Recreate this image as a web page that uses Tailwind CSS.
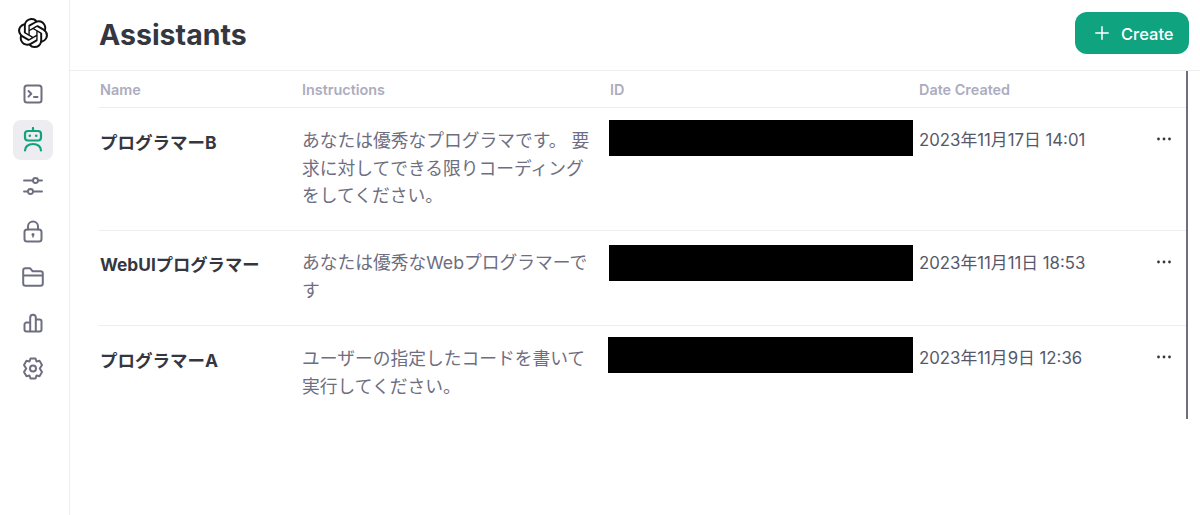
<!DOCTYPE html>
<html lang="ja">
<head>
<meta charset="utf-8">
<script src="https://cdn.jsdelivr.net/npm/@tailwindcss/browser@4"></script>
</head>
<body class="bg-white overflow-hidden">
<div class="flex h-[515px] w-[1200px] font-['Inter','Noto_Sans_CJK_JP',sans-serif] text-[#353740]">
  <aside class="w-[70px] shrink-0 border-r border-[#ececf1] flex flex-col items-start pl-[13px] pt-[18px]">
    <svg class="w-[30px] h-[30px] ml-[5px] mb-[26px]" viewBox="0 0 24 24" fill="#111"><path d="M22.2819 9.8211a5.9847 5.9847 0 0 0-.5157-4.9108 6.0462 6.0462 0 0 0-6.5098-2.9A6.0651 6.0651 0 0 0 4.9807 4.1818a5.9847 5.9847 0 0 0-3.9977 2.9 6.0462 6.0462 0 0 0 .7427 7.0966 5.98 5.98 0 0 0 .511 4.9107 6.051 6.051 0 0 0 6.5146 2.9001A5.9847 5.9847 0 0 0 13.2599 24a6.0557 6.0557 0 0 0 5.7718-4.2058 5.9894 5.9894 0 0 0 3.9977-2.9001 6.0557 6.0557 0 0 0-.7475-7.0729zm-9.022 12.6081a4.4755 4.4755 0 0 1-2.8764-1.0408l.1419-.0804 4.7783-2.7582a.7948.7948 0 0 0 .3927-.6813v-6.7369l2.02 1.1686a.071.071 0 0 1 .038.052v5.5826a4.504 4.504 0 0 1-4.4945 4.4944zm-9.6607-4.1254a4.4708 4.4708 0 0 1-.5346-3.0137l.142.0852 4.783 2.7582a.7712.7712 0 0 0 .7806 0l5.8428-3.3685v2.3324a.0804.0804 0 0 1-.0332.0615L9.74 19.9502a4.4992 4.4992 0 0 1-6.1408-1.6464zM2.3408 7.8956a4.485 4.485 0 0 1 2.3655-1.9728V11.6a.7664.7664 0 0 0 .3879.6765l5.8144 3.3543-2.0201 1.1685a.0757.0757 0 0 1-.071 0l-4.8303-2.7865A4.504 4.504 0 0 1 2.3408 7.872zm16.5963 3.8558L13.1038 8.364 15.1192 7.2a.0757.0757 0 0 1 .071 0l4.8303 2.7913a4.4944 4.4944 0 0 1-.6765 8.1042v-5.6772a.79.79 0 0 0-.407-.667zm2.0107-3.0231l-.142-.0852-4.7735-2.7818a.7759.7759 0 0 0-.7854 0L9.409 9.2297V6.8974a.0662.0662 0 0 1 .0284-.0615l4.8303-2.7866a4.4992 4.4992 0 0 1 6.6802 4.66zM8.3065 12.863l-2.02-1.1638a.0804.0804 0 0 1-.038-.0567V6.0742a4.4992 4.4992 0 0 1 7.3757-3.4537l-.142.0805L8.704 5.459a.7948.7948 0 0 0-.3927.6813zm1.0976-2.3654l2.602-1.4998 2.6069 1.4998v2.9994l-2.5974 1.4997-2.6067-1.4997Z"/></svg>
    <nav class="flex flex-col items-center gap-[5.8px] text-[#6e6e80]">
      <a class="w-[40px] h-[40px] rounded-[8px] flex items-center justify-center">
        <svg class="w-[20px] h-[20px]" viewBox="0 0 20 20" fill="none" stroke="currentColor" stroke-width="2" stroke-linecap="round" stroke-linejoin="round"><rect x="1.500" y="1.500" width="17" height="17" rx="2.500"/><path d="M5.500 7l2.800 2.800-2.800 2.800M11 13h3.500"/></svg>
      </a>
      <a class="w-[40px] h-[40px] rounded-[8px] bg-[#ececf1] flex items-center justify-center">
        <svg class="w-[20px] h-[25px]" viewBox="0 0 20 25" fill="none" stroke="#10a37f" stroke-width="2.200" stroke-linecap="round" stroke-linejoin="round"><path d="M10 1v2"/><rect x="2" y="4" width="16" height="9.500" rx="3"/><circle cx="6.800" cy="8.700" r="1.300" fill="#10a37f" stroke="none"/><circle cx="13.200" cy="8.700" r="1.300" fill="#10a37f" stroke="none"/><path d="M2 23.500c0-3.500 3-6.500 8-6.500s8 3 8 6.500"/></svg>
      </a>
      <a class="w-[40px] h-[40px] rounded-[8px] flex items-center justify-center">
        <svg class="w-[20px] h-[20px]" viewBox="0 0 20 20" fill="none" stroke="currentColor" stroke-width="1.900" stroke-linecap="round"><path d="M1 4.500h9M15 4.500h4M1 15.500h4M10 15.500h9"/><circle cx="12.500" cy="4.500" r="2.500"/><circle cx="7.500" cy="15.500" r="2.500"/></svg>
      </a>
      <a class="w-[40px] h-[40px] rounded-[8px] flex items-center justify-center">
        <svg class="w-[20px] h-[23px]" viewBox="0 0 20 23" fill="none" stroke="currentColor" stroke-width="2" stroke-linecap="round" stroke-linejoin="round"><rect x="1.500" y="9.500" width="17" height="12" rx="2.500"/><path d="M5 9.500V6.500a5 5 0 0 1 10 0v3"/><circle cx="10" cy="14.500" r="1.500" fill="currentColor" stroke="none"/><path d="M10 14.500v2.500" stroke-width="1.500"/></svg>
      </a>
      <a class="w-[40px] h-[40px] rounded-[8px] flex items-center justify-center">
        <svg class="w-[22px] h-[20px]" viewBox="0 0 22 20" fill="none" stroke="currentColor" stroke-width="2" stroke-linecap="round" stroke-linejoin="round"><path d="M1.200 3.500a2.300 2.300 0 0 1 2.300-2.300h4.500l2.500 3h8a2.300 2.300 0 0 1 2.300 2.300v10a2.300 2.300 0 0 1-2.300 2.300h-15a2.300 2.300 0 0 1-2.300-2.300zM1.200 8.500h19.600"/></svg>
      </a>
      <a class="w-[40px] h-[40px] rounded-[8px] flex items-center justify-center">
        <svg class="w-[20px] h-[20px]" viewBox="0 0 20 20" fill="none" stroke="currentColor" stroke-width="2" stroke-linejoin="round"><path d="M1.500 16.500v-5a2 2 0 0 1 2-2h3.700v9h-3.700a2 2 0 0 1-2-2zM7.200 18.500v-14a2.800 2.800 0 0 1 5.600 0v14zM12.800 18.500v-12h3.700a2 2 0 0 1 2 2v8a2 2 0 0 1-2 2z"/></svg>
      </a>
      <a class="w-[40px] h-[40px] rounded-[8px] flex items-center justify-center">
        <svg class="w-[22px] h-[23px]" viewBox="0 0 22 23" fill="none" stroke="currentColor" stroke-width="2" stroke-linejoin="round"><circle cx="11" cy="11.500" r="3"/><path d="M8.500 1.500h5l1 3 3-.7 2.500 4.200-2.200 3.500 2.200 3.500-2.500 4.200-3-.7-1 3h-5l-1-3-3 .7-2.500-4.200 2.200-3.500-2.200-3.500 2.500-4.200 3 .7z"/></svg>
      </a>
    </nav>
  </aside>
  <main class="flex-1 min-w-0 flex flex-col">
    <header class="h-[71px] shrink-0 border-b border-[#ececf1] flex items-center justify-between pl-[29px] pr-[11px]">
      <h1 class="text-[28.5px] leading-[36px] font-bold">Assistants</h1>
      <button class="w-[114px] h-[42px] -mt-[4px] rounded-[12px] bg-[#10a37f] text-white flex items-center pl-[20px] gap-[12px] text-[16.5px] font-medium">
        <svg class="w-[14px] h-[14px]" viewBox="0 0 14 14" fill="none" stroke="currentColor" stroke-width="1.500" stroke-linecap="round"><path d="M7 .8v12.400M.8 7h12.400"/></svg>
        <span class="pt-[2px]">Create</span>
      </button>
    </header>
    <div class="relative flex-1 pl-[29px] pr-[13px]">
      <div class="absolute right-[12px] top-0 w-[2px] h-[348px] bg-[#6e6e80]"></div>
      <div class="grid grid-cols-[203px_308px_309px_1fr] h-[37px] pt-[1px] border-b border-[#ececf1] items-center text-[14.4px] font-semibold text-[#acacbe]">
        <div class="pl-[1px]">Name</div><div>Instructions</div><div>ID</div><div>Date Created</div>
      </div>
      <div class="grid grid-cols-[203px_306px_311px_1fr] h-[123px] border-b border-[#ececf1] text-[17.75px]">
        <div class="pt-[23px] pl-[1px] leading-[24px] font-bold text-[17.5px]">プログラマーB</div>
        <div class="pt-[19px] text-[#6e6e80] leading-[27.5px] w-[290px]">あなたは優秀なプログラマです。 要求に対してできる限りコーディングをしてください。</div>
        <div class="pt-[12px] pl-[1px]"><div class="w-[304px] h-[36px] bg-black"></div></div>
        <div class="pt-[20px] leading-[24px] flex justify-between text-[#565869] text-[16.800px] pr-[15px]"><span>2023年11月17日 14:01</span><svg class="w-[16px] h-[4px] mt-[9px]" viewBox="0 0 16 4" fill="#353740"><circle cx="2.500" cy="2" r="1.400"/><circle cx="8" cy="2" r="1.400"/><circle cx="13.500" cy="2" r="1.400"/></svg></div>
      </div>
      <div class="grid grid-cols-[203px_306px_311px_1fr] h-[95px] border-b border-[#ececf1] text-[17.75px]">
        <div class="pt-[22px] pl-[1px] leading-[24px] font-bold text-[17.3px]">WebUIプログラマー</div>
        <div class="pt-[18px] text-[#6e6e80] leading-[27.5px] w-[290px]">あなたは優秀なWebプログラマーです</div>
        <div class="pt-[14px] pl-[1px]"><div class="w-[304px] h-[36px] bg-black"></div></div>
        <div class="pt-[20px] leading-[24px] flex justify-between text-[#565869] text-[16.800px] pr-[15px]"><span>2023年11月11日 18:53</span><svg class="w-[16px] h-[4px] mt-[9px]" viewBox="0 0 16 4" fill="#353740"><circle cx="2.500" cy="2" r="1.400"/><circle cx="8" cy="2" r="1.400"/><circle cx="13.500" cy="2" r="1.400"/></svg></div>
      </div>
      <div class="grid grid-cols-[203px_306px_311px_1fr] h-[95px] text-[17.75px]">
        <div class="pt-[23px] pl-[1px] leading-[24px] font-bold text-[17.5px]">プログラマーA</div>
        <div class="pt-[19px] text-[#6e6e80] leading-[27.5px] w-[290px]">ユーザーの指定したコードを書いて実行してください。</div>
        <div class="pt-[11px]"><div class="w-[305px] h-[36px] bg-black"></div></div>
        <div class="pt-[20px] leading-[24px] flex justify-between text-[#565869] text-[16.800px] pr-[15px]"><span>2023年11月9日 12:36</span><svg class="w-[16px] h-[4px] mt-[9px]" viewBox="0 0 16 4" fill="#353740"><circle cx="2.500" cy="2" r="1.400"/><circle cx="8" cy="2" r="1.400"/><circle cx="13.500" cy="2" r="1.400"/></svg></div>
      </div>
    </div>
  </main>
</div>
</body>
</html>
